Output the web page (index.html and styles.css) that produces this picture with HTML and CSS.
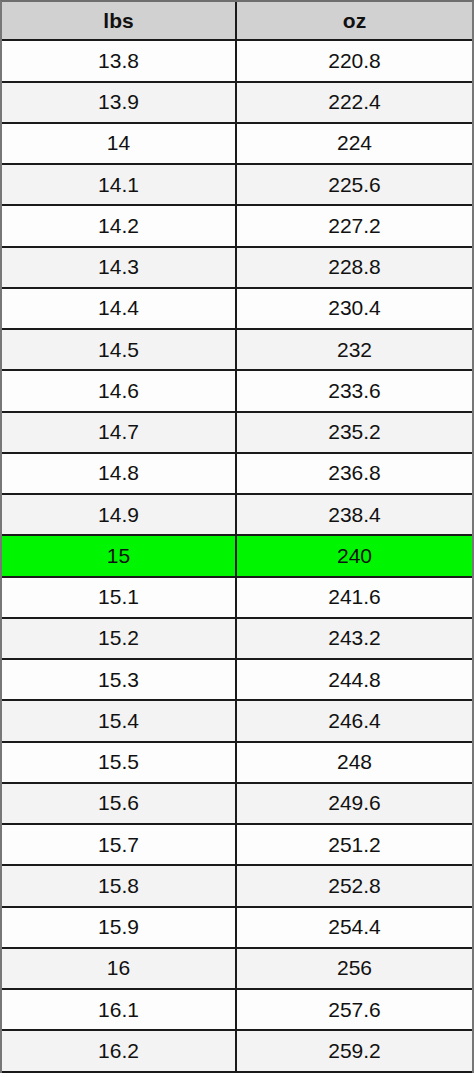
FILE: index.html
```html
<!DOCTYPE html>
<html>
<head>
<meta charset="utf-8">
<link rel="stylesheet" href="styles.css">
</head>
<body>
<div class="conv">
  <div class="row head"><div class="cell">lbs</div><div class="cell">oz</div></div>
  <div class="row"><div class="cell">13.8</div><div class="cell">220.8</div></div>
  <div class="row alt"><div class="cell">13.9</div><div class="cell">222.4</div></div>
  <div class="row"><div class="cell">14</div><div class="cell">224</div></div>
  <div class="row alt"><div class="cell">14.1</div><div class="cell">225.6</div></div>
  <div class="row"><div class="cell">14.2</div><div class="cell">227.2</div></div>
  <div class="row alt"><div class="cell">14.3</div><div class="cell">228.8</div></div>
  <div class="row"><div class="cell">14.4</div><div class="cell">230.4</div></div>
  <div class="row alt"><div class="cell">14.5</div><div class="cell">232</div></div>
  <div class="row"><div class="cell">14.6</div><div class="cell">233.6</div></div>
  <div class="row alt"><div class="cell">14.7</div><div class="cell">235.2</div></div>
  <div class="row"><div class="cell">14.8</div><div class="cell">236.8</div></div>
  <div class="row alt"><div class="cell">14.9</div><div class="cell">238.4</div></div>
  <div class="row hit"><div class="cell">15</div><div class="cell">240</div></div>
  <div class="row"><div class="cell">15.1</div><div class="cell">241.6</div></div>
  <div class="row alt"><div class="cell">15.2</div><div class="cell">243.2</div></div>
  <div class="row"><div class="cell">15.3</div><div class="cell">244.8</div></div>
  <div class="row alt"><div class="cell">15.4</div><div class="cell">246.4</div></div>
  <div class="row"><div class="cell">15.5</div><div class="cell">248</div></div>
  <div class="row alt"><div class="cell">15.6</div><div class="cell">249.6</div></div>
  <div class="row"><div class="cell">15.7</div><div class="cell">251.2</div></div>
  <div class="row alt"><div class="cell">15.8</div><div class="cell">252.8</div></div>
  <div class="row"><div class="cell">15.9</div><div class="cell">254.4</div></div>
  <div class="row alt"><div class="cell">16</div><div class="cell">256</div></div>
  <div class="row"><div class="cell">16.1</div><div class="cell">257.6</div></div>
  <div class="row alt"><div class="cell">16.2</div><div class="cell">259.2</div></div>
</div>
</body>
</html>
```
FILE: styles.css
```css
html, body {
  margin: 0;
  padding: 0;
  background: #fff;
}
.conv {
  width: 474px;
  box-sizing: border-box;
  border-top: 2px solid #6e6e6e;
  border-left: 2px solid #777;
  border-right: 2px solid #777;
  font-family: "Liberation Sans", Arial, sans-serif;
  font-size: 21px;
  color: #111;
}
.row {
  display: grid;
  grid-template-columns: 233px 1fr;
  height: 41.25px;
  box-sizing: border-box;
  border-bottom: 2px solid #1a1a1a;
  background: #fdfdfd;
}
.row.head {
  height: 39.25px;
  background: #d1d1d1;
  font-weight: bold;
}
.row.alt {
  background: #f3f3f3;
}
.row.hit {
  background: #00f500;
}
.cell {
  display: flex;
  align-items: center;
  justify-content: center;
}
.cell + .cell {
  border-left: 2px solid #1a1a1a;
}
```
